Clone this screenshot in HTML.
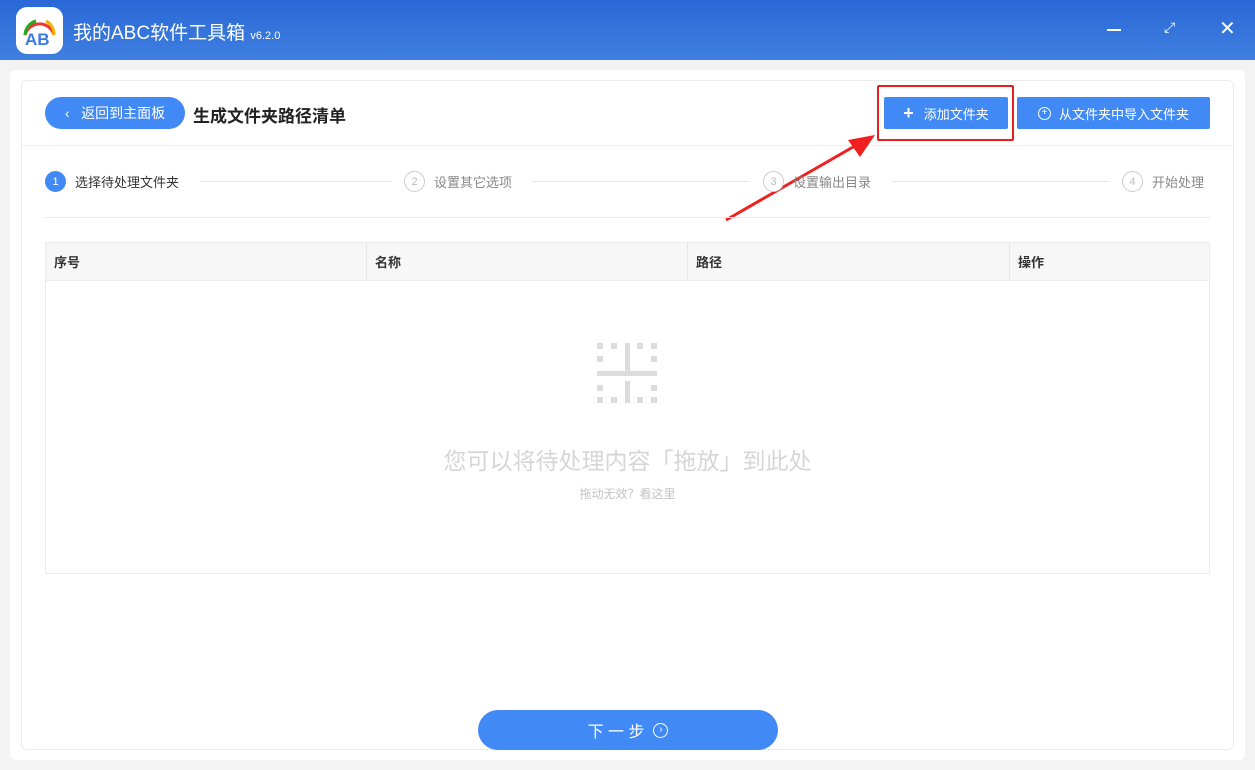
<!DOCTYPE html>
<html><head><meta charset="utf-8"><style>
*{margin:0;padding:0;box-sizing:border-box}
body{width:1255px;height:770px;overflow:hidden;background:#f3f3f3;font-family:"Liberation Sans","Noto Sans CJK SC",sans-serif;position:relative}
.top{position:absolute;left:0;top:0;width:1255px;height:60px;background:linear-gradient(180deg,#2a68d6,#3f7fe0)}
.abs{position:absolute}
.btn{position:absolute;background:#418af5;color:#fff;font-size:13px;display:flex;align-items:center;justify-content:center}
.step{position:absolute;top:171px;font-size:13px;color:#888;display:flex;align-items:center}
.circ{width:21px;height:21px;border-radius:50%;border:1px solid #ccc;color:#bbb;font-size:11px;display:flex;align-items:center;justify-content:center;margin-right:9px;background:#fff}
.ln{position:absolute;top:181px;height:1px;background:#e6e6e6}
.th{position:absolute;top:252px;font-size:13px;color:#333;font-weight:bold}
</style></head><body>
<div class="top">
<div class="abs" style="left:16px;top:7px;width:47px;height:47px;background:#fff;border-radius:11px;"></div>
<svg class="abs" style="left:16px;top:7px" width="47" height="47"><path d="M9 28 A15 15 0 0 1 38 28" fill="none" stroke="#e33" stroke-width="3"/><path d="M9 28 A15 15 0 0 1 20 14" fill="none" stroke="#2a2" stroke-width="3"/><path d="M30 14 A15 15 0 0 1 38 28" fill="none" stroke="#f5b300" stroke-width="3"/><text x="9" y="38" font-size="17" font-weight="bold" fill="#3b7be0" font-family="Liberation Sans">AB</text></svg>
<div class="abs" style="left:73px;top:18px;color:#fff;font-size:19px">我的ABC软件工具箱 <span style="font-size:11px">v6.2.0</span></div>
<div class="abs" style="left:1107px;top:29px;width:14px;height:1.5px;background:#fff"></div>
<div class="abs" style="left:1164px;top:19px;color:#fff;font-size:14px">⤢</div>
<div class="abs" style="left:1219px;top:16px;color:#fff;font-size:20px">✕</div>
</div>
<div class="abs" style="left:10px;top:70px;width:1235px;height:690px;background:#fff;border-radius:6px"></div>
<div class="abs" style="left:21px;top:80px;width:1213px;height:670px;border:1px solid #ececec;border-radius:6px"></div>
<div class="abs" style="left:22px;top:145px;width:1211px;height:1px;background:#eee"></div>
<div class="btn" style="left:45px;top:97px;width:140px;height:32px;border-radius:16px;font-size:14px">‹&nbsp;&nbsp;&nbsp;返回到主面板</div>
<div class="abs" style="left:193px;top:102px;font-size:17px;color:#222;font-weight:bold">生成文件夹路径清单</div>
<div class="abs" style="left:877px;top:85px;width:137px;height:56px;border:2px solid #e62020;border-radius:2px"></div>
<div class="btn" style="left:884px;top:97px;width:124px;height:32px;border-radius:2px"><b style="font-size:18px;margin-right:10px">+</b>添加文件夹</div>
<div class="btn" style="left:1017px;top:97px;width:193px;height:32px;border-radius:2px"><span style="display:inline-block;width:13px;height:13px;border:1.5px solid #fff;border-radius:50%;margin-right:8px;font-size:10px;line-height:10px;text-align:center">+</span>从文件夹中导入文件夹</div>
<svg class="abs" style="left:720px;top:130px" width="160" height="95"><line x1="6" y1="90" x2="140" y2="13" stroke="#f02020" stroke-width="3"/><polygon points="155,5 128,10 140,27" fill="#f02020"/></svg>
<div class="step" style="left:45px;color:#333"><div class="circ" style="background:#418af5;border-color:#418af5;color:#fff">1</div>选择待处理文件夹</div>
<div class="ln" style="left:200px;width:192px"></div>
<div class="step" style="left:404px"><div class="circ">2</div>设置其它选项</div>
<div class="ln" style="left:532px;width:218px"></div>
<div class="step" style="left:763px"><div class="circ">3</div>设置输出目录</div>
<div class="ln" style="left:892px;width:218px"></div>
<div class="step" style="left:1122px"><div class="circ">4</div>开始处理</div>
<div class="abs" style="left:45px;top:217px;width:1165px;height:1px;background:#eaeaea"></div>
<div class="abs" style="left:45px;top:242px;width:1165px;height:332px;border:1px solid #ececec"></div>
<div class="abs" style="left:46px;top:243px;width:1163px;height:38px;background:#f7f7f7;border-bottom:1px solid #ececec"></div>
<div class="abs" style="left:366px;top:243px;width:1px;height:38px;background:#e6e6e6"></div>
<div class="abs" style="left:687px;top:243px;width:1px;height:38px;background:#e6e6e6"></div>
<div class="abs" style="left:1009px;top:243px;width:1px;height:38px;background:#e6e6e6"></div>
<div class="th" style="left:54px">序号</div><div class="th" style="left:375px">名称</div><div class="th" style="left:696px">路径</div><div class="th" style="left:1018px">操作</div>
<svg class="abs" style="left:597px;top:343px" width="62" height="62"><g fill="#dcdcdc"><rect x="0" y="28" width="60" height="5"/><rect x="28" y="0" width="5" height="28"/><rect x="0" y="0" width="6" height="6"/><rect x="0" y="13" width="6" height="6"/><rect x="54" y="0" width="6" height="6"/><rect x="54" y="13" width="6" height="6"/><rect x="0" y="42" width="6" height="6"/><rect x="0" y="54" width="6" height="6"/><rect x="14" y="54" width="6" height="6"/><rect x="40" y="54" width="6" height="6"/><rect x="54" y="54" width="6" height="6"/><rect x="54" y="42" width="6" height="6"/><rect x="14" y="0" width="6" height="6"/><rect x="40" y="0" width="6" height="6"/><rect x="28" y="38" width="5" height="22"/></g></svg>
<div class="abs" style="left:0;width:1255px;top:442px;text-align:center;font-size:23px;color:#d6d6d6">您可以将待处理内容「拖放」到此处</div>
<div class="abs" style="left:0;width:1255px;top:485px;text-align:center;font-size:12px;color:#c4c4c4">拖动无效？看这里</div>
<div class="btn" style="left:478px;top:710px;width:300px;height:40px;border-radius:20px;font-size:16px">下 一 步&nbsp;&nbsp;<span style="display:inline-block;width:15px;height:15px;border:1.5px solid #fff;border-radius:50%;font-size:10px;line-height:12px;text-align:center">›</span></div>
</body></html>
